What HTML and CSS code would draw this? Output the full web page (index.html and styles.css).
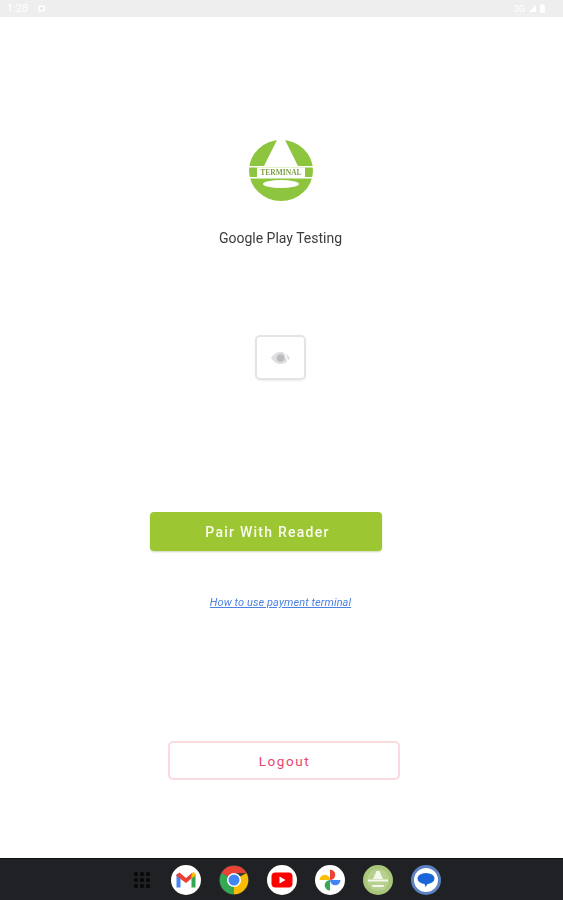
FILE: index.html
```html
<!DOCTYPE html>
<html lang="en">
<head>
<meta charset="UTF-8">
<title>Terminal</title>
<link rel="stylesheet" href="styles.css">
</head>
<body>
<div class="app">
    <div class="status-bar">
        <div class="status-left">
            <span class="clock">1:28</span>
            <svg class="status-icon" viewBox="0 0 8 8"><rect x="0.5" y="0.5" width="7" height="7" rx="1" fill="#fff"/><rect x="2.5" y="2.5" width="3" height="3" fill="#e2e2e2"/></svg>
        </div>
        <div class="status-right">
            <span class="net">3G</span>
            <svg class="status-icon" viewBox="0 0 8 8"><path d="M0 8 L8 0 V8 Z" fill="#fff"/></svg>
            <svg class="battery" viewBox="0 0 5 9"><path d="M1.5 0 H3.5 V1 H5 V9 H0 V1 H1.5 Z" fill="#fff"/></svg>
        </div>
    </div>

    <main class="content">
        <svg class="logo" viewBox="0 0 66 61">
            <ellipse cx="33" cy="30.5" rx="32" ry="30.5" fill="#8dc53e"/>
            <path d="M29 0 H37 L50 26 H16 Z" fill="#fff"/>
            <path d="M0 26 H66 V27.5 H0 Z M0 37 H66 V38.5 H0 Z" fill="#fff"/>
            <rect x="9" y="27.5" width="48" height="9.5" fill="#fff"/>
            <text class="logo-text" x="33" y="35" text-anchor="middle">TERMINAL</text>
            <ellipse cx="33" cy="44" rx="18" ry="4" fill="#fff"/>
        </svg>
        <p class="merchant">Google Play Testing</p>

        <div class="reader-box">
            <svg class="eye" viewBox="0 0 24 14">
                <path d="M1 7 C5 1 9 0 12 0 C15 0 19 1 23 7 C19 13 15 14 12 14 C9 14 5 13 1 7 Z" fill="#dedee1"/>
                <circle cx="12" cy="7" r="4.5" fill="#bcbcc0"/>
                <path d="M16.5 0 L21.5 13" stroke="#fff" stroke-width="1.5"/>
            </svg>
        </div>

        <button class="btn-pair">Pair With Reader</button>
        <a class="help-link" href="#">How to use payment terminal</a>
        <button class="btn-logout">Logout</button>
    </main>

    <nav class="dock">
        <svg class="apps" viewBox="0 0 16 16">
            <g fill="#09090a">
                <rect x="0" y="0" width="4" height="4" rx="1.5"/><rect x="6" y="0" width="4" height="4" rx="1.5"/><rect x="12" y="0" width="4" height="4" rx="1.5"/>
                <rect x="0" y="6" width="4" height="4" rx="1.5"/><rect x="6" y="6" width="4" height="4" rx="1.5"/><rect x="12" y="6" width="4" height="4" rx="1.5"/>
                <rect x="0" y="12" width="4" height="4" rx="1.5"/><rect x="6" y="12" width="4" height="4" rx="1.5"/><rect x="12" y="12" width="4" height="4" rx="1.5"/>
            </g>
        </svg>

        <svg class="dock-icon" viewBox="0 0 30 30">
            <circle cx="15" cy="15" r="15" fill="#fff"/>
            <path d="M5.5 22.5 V9.5 L9.5 8.5 V22.5 Z" fill="#4285f4"/>
            <path d="M20.5 22.5 V8.5 L24.5 9.5 V22.5 Z" fill="#34a853"/>
            <path d="M5.5 9.5 L8.5 7.5 L15 13 L21.5 7.5 L20.5 13.5 L15 18 L5.5 11 Z" fill="#ea4335"/>
            <path d="M20.5 9 L22 7.2 Q24.5 7.5 24.5 10.5 L20.5 13.5 Z" fill="#fbbc04"/>
        </svg>

        <svg class="dock-icon" viewBox="0 0 30 30">
            <circle cx="15" cy="15" r="15" fill="#3a3b3a"/>
            <path d="M15 15 L2.5 8 A14.3 14.3 0 0 1 27.5 8 H15 Z" fill="#ea4335"/>
            <path d="M15 15 L27.5 8 A14.3 14.3 0 0 1 15 29.3 Z" fill="#fbbc04"/>
            <path d="M15 15 L15 29.3 A14.3 14.3 0 0 1 2.5 8 Z" fill="#34a853"/>
            <circle cx="15" cy="15" r="7" fill="#fff"/>
            <circle cx="15" cy="15" r="5.5" fill="#4285f4"/>
        </svg>

        <svg class="dock-icon" viewBox="0 0 30 30">
            <circle cx="15" cy="15" r="15" fill="#fff"/>
            <rect x="4.5" y="7.5" width="21" height="15" rx="4" fill="#f00"/>
            <path d="M12.5 11.5 L18.5 15 L12.5 18.5 Z" fill="#fff"/>
        </svg>

        <svg class="dock-icon" viewBox="0 0 30 30">
            <circle cx="15" cy="15" r="15" fill="#fff"/>
            <path d="M15 15 H4.5 A5.25 5.25 0 0 1 15 15 Z" fill="#fbbc04"/>
            <path d="M15 15 V4.5 A5.25 5.25 0 0 1 15 15 Z" fill="#ea4335"/>
            <path d="M15 15 H25.5 A5.25 5.25 0 0 1 15 15 Z" fill="#4285f4"/>
            <path d="M15 15 V25.5 A5.25 5.25 0 0 1 15 15 Z" fill="#34a853"/>
        </svg>

        <svg class="dock-icon" viewBox="0 0 30 30">
            <circle cx="15" cy="15" r="15" fill="#a9c77a"/>
            <circle cx="15" cy="15" r="11" fill="#b7d08f"/>
            <path d="M13.5 6 H16.5 L20 14 H10 Z" fill="#f4f8ec"/>
            <rect x="5" y="14.5" width="20" height="2" fill="#f4f8ec"/>
            <rect x="9" y="20" width="12" height="2" rx="1" fill="#f4f8ec"/>
        </svg>

        <svg class="dock-icon" viewBox="0 0 30 30">
            <circle cx="15" cy="15" r="15" fill="#5d82c4"/>
            <circle cx="15" cy="15" r="12" fill="#fff"/>
            <ellipse cx="15" cy="13.5" rx="8.5" ry="5.5" fill="#1a66d8"/>
            <path d="M13 17 H18 L14.5 22 Z" fill="#1a66d8"/>
        </svg>
    </nav>
</div>
</body>
</html>
```
FILE: styles.css
```css
* {
    box-sizing: border-box;
}
body {
    margin: 0;
    font-family: Roboto, "Liberation Sans", sans-serif;
    background: #fff;
}
.app {
    height: 900px;
    display: flex;
    flex-direction: column;
    overflow: hidden;
}

.status-bar {
    height: 17px;
    background: #eeeeee;
    display: flex;
    justify-content: space-between;
    align-items: center;
    padding: 0 18px 0 7px;
    color: #fff;
    font-size: 11px;
}
.status-left, .status-right {
    display: flex;
    align-items: center;
    gap: 10px;
}
.status-right {
    gap: 4px;
}
.status-right .net {
    font-size: 9px;
}
.status-icon {
    width: 7px;
    height: 7px;
}
.battery {
    width: 5px;
    height: 9px;
}

.content {
    flex: 1;
    display: flex;
    flex-direction: column;
    align-items: center;
    padding-top: 123px;
}
.logo {
    width: 66px;
    height: 61px;
    margin-right: 1px;
    filter: blur(0.4px);
}
.logo-text {
    font-family: "Liberation Serif", serif;
    font-size: 7.5px;
    font-weight: bold;
    fill: #7f9f4a;
}
.merchant {
    margin: 28px 2px 0 0;
    font-size: 14px;
    line-height: 18px;
    color: #3c3c3c;
    filter: blur(0.3px);
}

.reader-box {
    width: 51px;
    height: 45px;
    margin: 88px 2px 0 0;
    border: 2px solid #e4e4e4;
    border-radius: 5px;
    display: flex;
    align-items: center;
    justify-content: center;
    box-shadow: 0 1px 2px #eeeeee;
}
.eye {
    width: 21px;
    height: 12px;
    filter: blur(0.5px);
}

.btn-pair {
    width: 232px;
    height: 39px;
    margin: 132px 32px 0 0;
    padding-left: 10px;
    background: #9dc633;
    color: #fafaf0;
    border: none;
    border-radius: 4px;
    font-family: Roboto, sans-serif;
    font-size: 14px;
    font-weight: 500;
    letter-spacing: 1.25px;
    box-shadow: 0 1px 2px #d0d8b8;
    filter: blur(0.2px);
}
.help-link {
    margin: 45px 2px 0 0;
    font-size: 11px;
    line-height: 14px;
    letter-spacing: 0.08px;
    font-style: italic;
    color: #4d82e0;
    text-decoration: underline;
    filter: blur(0.3px);
}
.btn-logout {
    width: 232px;
    height: 39px;
    margin: 131px 0 0 4px;
    padding-left: 8px;
    background: #fff;
    color: #e8446e;
    border: 2px solid #fcd9df;
    border-radius: 5px;
    font-family: Roboto, sans-serif;
    font-size: 13.5px;
    letter-spacing: 1.6px;
}

.dock {
    height: 42px;
    background: #202124;
    display: flex;
    align-items: center;
    padding-left: 134px;
    gap: 18px;
    border-top: 1px solid #111;
}
.apps {
    width: 16px;
    height: 16px;
    margin-right: 3px;
    filter: blur(0.4px);
}
.dock-icon {
    width: 30px;
    height: 30px;
    filter: blur(0.4px);
}
```
